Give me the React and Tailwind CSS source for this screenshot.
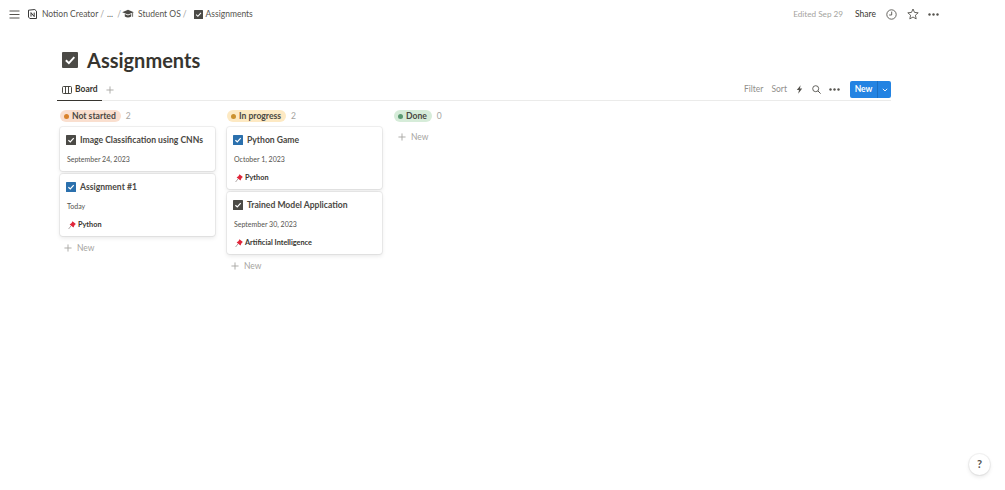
import React from "react";

const FONT = { fontFamily: '"Lato", "Open Sans", sans-serif' };

function CheckBox({ color = "#4b4a46", size = 10 }) {
  return (
    <svg width={size} height={size} viewBox="0 0 10 10" className="shrink-0">
      <rect width="10" height="10" rx="0.6" fill={color} />
      <path d="M2.4 5.2 L4.3 7 L7.7 3.2" fill="none" stroke="#fff" strokeWidth="1.2" />
    </svg>
  );
}

function Pin() {
  return (
    <svg width="8" height="9" viewBox="0 0 8 9" className="shrink-0">
      <path d="M4.4 0.2 L7.9 3.1 L6.6 3.9 L5.5 6.6 L1.6 3.6 L3.6 2.1 Z" fill="#e0263a" />
      <path d="M2.9 5 L0.6 8" stroke="#9a8f8f" strokeWidth="0.8" />
    </svg>
  );
}

function Plus({ size = 9, color = "#a5a4a0" }) {
  return (
    <svg width={size} height={size} viewBox="0 0 9 9" className="shrink-0">
      <path d="M4.5 0.5 V8.5 M0.5 4.5 H8.5" stroke={color} strokeWidth="1" />
    </svg>
  );
}

function Dots({ color = "#55534e" }) {
  return (
    <svg width="11" height="3" viewBox="0 0 11 3">
      <circle cx="1.5" cy="1.5" r="1.2" fill={color} />
      <circle cx="5.5" cy="1.5" r="1.2" fill={color} />
      <circle cx="9.5" cy="1.5" r="1.2" fill={color} />
    </svg>
  );
}

function Card({ title, date, tag, blue }) {
  return (
    <div className={"bg-white rounded-[3px] shadow-[0_0_0_1px_rgba(15,15,15,0.06),0_2px_4px_rgba(15,15,15,0.1)] px-[6px] pt-[8px] flex flex-col " + (tag ? "pb-[6px]" : "pb-[7px]")}>
      <div className="flex items-center gap-[4px] h-[10px]">
        <CheckBox color={blue ? "#2b70ad" : "#4b4a46"} />
        <span className="text-[8.6px] font-bold text-[#4a4843] leading-[10px] whitespace-nowrap">{title}</span>
      </div>
      <div className="ml-px text-[7px] text-[#55534e] leading-[10px] mt-[9px]">{date}</div>
      {tag && (
        <div className="flex items-center gap-[2px] mt-[9px] h-[10px]">
          <span className="pl-[2px]"><Pin /></span>
          <span className="text-[7.3px] font-bold text-[#37352f] leading-[10px]">{tag}</span>
        </div>
      )}
    </div>
  );
}

function NewRow({ className = "" }) {
  return (
    <div className={"flex items-center gap-[5px] pl-[4px] h-[10px] " + className}>
      <Plus size={8} />
      <span className="text-[8.5px] text-[#a5a4a0] leading-[10px]">New</span>
    </div>
  );
}

function Column({ label, count, bg, dot, cards }) {
  return (
    <div className="w-[155px] flex flex-col">
      <div className="flex items-center gap-[5px] h-[12px]">
        <div className={"flex items-center gap-[3px] h-[12px] rounded-full pl-[4px] pr-[5px] " + bg}>
          <span className={"w-[5px] h-[5px] rounded-full " + dot} />
          <span className="text-[8.6px] font-bold text-[#4a4843] leading-[12px] whitespace-nowrap">{label}</span>
        </div>
        <span className="text-[8.5px] text-[#a5a4a0] leading-[12px]">{count}</span>
      </div>
      <div className="flex flex-col gap-[3px] mt-[5px]">
        {cards.map((c) => (
          <Card key={c.title} {...c} />
        ))}
      </div>
      <NewRow className="mt-[7px]" />
    </div>
  );
}

export default function App() {
  return (
    <div style={FONT} className="relative w-[1005px] h-[490px] bg-white overflow-hidden text-[#37352f]">
      <header className="h-[28px] flex items-center justify-between pl-[9px] pr-[66px]">
        <div className="flex items-center text-[8.5px] text-[#55534e] whitespace-nowrap">
          <svg width="11" height="9" viewBox="0 0 11 9">
            <path d="M0.5 1 H10.5 M0.5 4.5 H10.5 M0.5 8 H10.5" stroke="#55534e" strokeWidth="1" />
          </svg>
          <svg width="9" height="10" viewBox="0 0 9 10" className="ml-[8px]">
            <path d="M0.5 1.2 L6.8 0.5 L8.5 2.2 V9.5 H1.8 L0.5 8 Z" fill="#fff" stroke="#222" strokeWidth="0.9" />
            <path d="M3 3.6 V7.6 M3 3.6 L6.2 7.6 M6.2 3.6 V7.6" stroke="#222" strokeWidth="0.9" fill="none" />
          </svg>
          <span className="ml-[5px]">Notion Creator</span>
          <span className="ml-[2px] text-[#a5a4a0]">/</span>
          <span className="ml-[3px]">...</span>
          <span className="ml-[4px] text-[#a5a4a0]">/</span>
          <svg width="12" height="10" viewBox="0 0 12 10" className="ml-px">
            <path d="M6 0.8 L11.8 3.2 L6 5.6 L0.2 3.2 Z" fill="#4b4a46" />
            <path d="M2.8 5 V7.6 Q6 9.6 9.2 7.6 V5 L6 6.4 Z" fill="#4b4a46" />
            <path d="M10.6 3.6 V7.8" stroke="#4b4a46" strokeWidth="0.8" />
          </svg>
          <span className="ml-[4px]">Student OS</span>
          <span className="ml-[2px] text-[#a5a4a0]">/</span>
          <span className="ml-[7px]"><CheckBox size={9} /></span>
          <span className="ml-[3px]">Assignments</span>
        </div>
        <div className="flex items-center whitespace-nowrap">
          <span className="text-[8.2px] text-[#a5a4a0]">Edited Sep 29</span>
          <span className="text-[8.5px] text-[#37352f] ml-[12px]">Share</span>
          <svg width="11" height="11" viewBox="0 0 11 11" className="ml-[10px]">
            <circle cx="5.5" cy="5.5" r="4.7" fill="none" stroke="#55534e" strokeWidth="0.9" />
            <path d="M5.7 2.6 V6 H3.2" fill="none" stroke="#55534e" strokeWidth="0.9" />
          </svg>
          <svg width="12" height="12" viewBox="0 0 12 12" className="ml-[10px]">
            <path d="M6 1 L7.5 4.4 L11.2 4.8 L8.4 7.2 L9.2 10.9 L6 9 L2.8 10.9 L3.6 7.2 L0.8 4.8 L4.5 4.4 Z" fill="none" stroke="#55534e" strokeWidth="0.9" />
          </svg>
          <span className="ml-[9px] flex"><Dots /></span>
        </div>
      </header>

      <main className="pl-[57px] pr-[114px]">
        <div className="flex items-center mt-[19px] h-[26px]">
          <span className="ml-[5px]"><CheckBox size={16} /></span>
          <h1 className="ml-[9px] text-[20px] font-bold text-[#37352f] leading-[26px]">Assignments</h1>
        </div>
        <div className="flex items-center justify-between h-[22px] mt-[6px] border-b border-[#ebebea]">
          <div className="relative flex items-center h-full pl-[5px]">
            <svg width="10" height="8" viewBox="0 0 10 8">
              <rect x="0.5" y="0.5" width="9" height="7" rx="1" fill="none" stroke="#37352f" strokeWidth="0.9" />
              <path d="M3.5 0.5 V7.5 M6.5 0.5 V7.5" stroke="#37352f" strokeWidth="0.9" />
            </svg>
            <span className="ml-[3px] text-[8.5px] font-bold">Board</span>
            <span className="ml-[8px]"><Plus size={8} /></span>
            <span className="absolute left-0 -bottom-px w-[45px] h-[1.5px] bg-[#37352f]" />
          </div>
          <div className="flex items-center">
            <span className="text-[8.5px] text-[#91908c]">Filter</span>
            <span className="ml-[8px] text-[8.5px] text-[#91908c]">Sort</span>
            <svg width="7" height="9" viewBox="0 0 7 9" className="ml-[9px]">
              <path d="M4.6 0.2 L0.8 5 H3 L2.2 8.8 L6.2 3.6 H3.9 Z" fill="#55534e" />
            </svg>
            <svg width="9" height="9" viewBox="0 0 9 9" className="ml-[9px]">
              <circle cx="3.7" cy="3.7" r="3" fill="none" stroke="#55534e" strokeWidth="0.9" />
              <path d="M5.9 5.9 L8.6 8.6" stroke="#55534e" strokeWidth="1" />
            </svg>
            <span className="ml-[8px] flex"><Dots /></span>
            <div className="ml-[10px] flex items-center h-[17px] w-[41px] rounded-[2px] bg-[#2383e2] text-white">
              <span className="w-[27px] text-center text-[8.5px] font-bold">New</span>
              <span className="w-px h-full bg-[#1b6fc2]" />
              <svg width="6" height="4" viewBox="0 0 6 4" className="ml-[4px]">
                <path d="M0.8 0.8 L3 3 L5.2 0.8" fill="none" stroke="#fff" strokeWidth="0.9" />
              </svg>
            </div>
          </div>
        </div>
        <div className="flex gap-[12px] pl-[3px] mt-[9px]">
          <Column
            label="Not started"
            count="2"
            bg="bg-[#fadfcf]"
            dot="bg-[#d9822b]"
            cards={[
              { title: "Image Classification using CNNs", date: "September 24, 2023" },
              { title: "Assignment #1", date: "Today", tag: "Python", blue: true },
            ]}
          />
          <Column
            label="In progress"
            count="2"
            bg="bg-[#fde9c3]"
            dot="bg-[#cb912f]"
            cards={[
              { title: "Python Game", date: "October 1, 2023", tag: "Python", blue: true },
              { title: "Trained Model Application", date: "September 30, 2023", tag: "Artificial Intelligence" },
            ]}
          />
          <div className="w-[155px] flex flex-col">
            <div className="flex items-center gap-[5px] h-[12px]">
              <div className="flex items-center gap-[3px] h-[12px] rounded-full pl-[4px] pr-[5px] bg-[#d6ecd9]">
                <span className="w-[5px] h-[5px] rounded-full bg-[#5b9a72]" />
                <span className="text-[8.6px] font-bold text-[#4a4843] leading-[12px]">Done</span>
              </div>
              <span className="text-[8.5px] text-[#a5a4a0] leading-[12px]">0</span>
            </div>
            <NewRow className="mt-[10px]" />
          </div>
        </div>
      </main>

      <div className="absolute left-[969px] top-[454px] w-[21px] h-[21px] rounded-full bg-white shadow-[0_0_0_1px_rgba(15,15,15,0.05),0_2px_4px_rgba(15,15,15,0.1)] flex items-center justify-center text-[11px] font-bold text-[#55534e]">
        ?
      </div>
    </div>
  );
}
